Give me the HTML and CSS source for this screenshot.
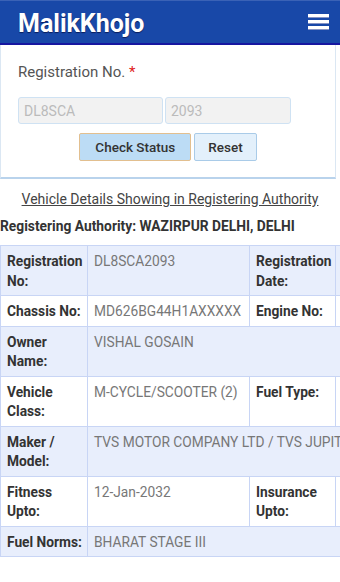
FILE: index.html
```html
<!DOCTYPE html>
<html lang="en">
<head>
    <meta charset="UTF-8">
    <meta name="viewport" content="width=device-width, initial-scale=1.0">
    <title>MalikKhojo</title>
    <link rel="stylesheet" href="styles.css">
</head>
<body>
    <div class="header">
        <span class="brand">MalikKhojo</span>
        <div class="menu">
            <span></span>
            <span></span>
            <span></span>
        </div>
    </div>

    <div class="panel">
        <div class="label">Registration No. <span class="req">*</span></div>
        <div class="inputs">
            <input type="text" class="reg-a" value="DL8SCA" disabled>
            <input type="text" class="reg-b" value="2093" disabled>
        </div>
        <div class="actions">
            <button class="btn primary">Check Status</button>
            <button class="btn">Reset</button>
        </div>
    </div>

    <div class="details-title">Vehicle Details Showing in Registering Authority</div>
    <div class="authority">Registering Authority: WAZIRPUR DELHI, DELHI</div>

    <div class="table-wrap">
        <table class="details">
            <colgroup>
                <col class="c1"><col class="c2"><col class="c3"><col class="c4">
            </colgroup>
            <tr class="alt">
                <th>Registration No:</th><td>DL8SCA2093</td>
                <th>Registration Date:</th><td></td>
            </tr>
            <tr>
                <th>Chassis No:</th><td>MD626BG44H1AXXXXX</td>
                <th>Engine No:</th><td></td>
            </tr>
            <tr class="alt">
                <th>Owner Name:</th><td colspan="3">VISHAL GOSAIN</td>
            </tr>
            <tr>
                <th>Vehicle Class:</th><td>M-CYCLE/SCOOTER (2)</td>
                <th>Fuel Type:</th><td></td>
            </tr>
            <tr class="alt">
                <th>Maker / Model:</th><td colspan="3">TVS MOTOR COMPANY LTD / TVS JUPITER</td>
            </tr>
            <tr>
                <th>Fitness Upto:</th><td>12-Jan-2032</td>
                <th>Insurance Upto:</th><td></td>
            </tr>
            <tr class="alt">
                <th>Fuel Norms:</th><td colspan="3">BHARAT STAGE III</td>
            </tr>
        </table>
    </div>
</body>
</html>
```

FILE: styles.css
```css
body {
    margin: 0;
    font-family: Roboto, "Liberation Sans", Arial, sans-serif;
    background: #fff;
    color: #333;
    overflow: hidden;
}
.header {
    height: 42px;
    background-color: #1848a8;
    border-top: 1px solid #3a62b6;
    border-bottom: 2px solid #1616a0;
    display: flex;
    align-items: center;
    justify-content: space-between;
    padding: 0 11px 0 18px;
    box-sizing: content-box;
}
.brand {
    color: #fff;
    font-size: 25px;
    font-weight: bold;
    text-shadow: 0 1px 1px rgba(0,0,40,0.6);
    margin-top: 2px;
}
.menu {
    display: flex;
    flex-direction: column;
    gap: 3px;
    margin-top: -2px;
}
.menu span {
    display: block;
    width: 21px;
    height: 3px;
    background: #fff;
    box-shadow: 0 1px 0 rgba(180,180,210,0.7);
}
.panel {
    border: 1px solid #dbe7f3;
    border-top: none;
    border-bottom: 2px solid #b9d3ec;
    width: 336px;
    padding: 18px 0 15px 17px;
    box-sizing: border-box;
    height: 134px;
}
.label {
    font-size: 15px;
    color: #555;
}
.req {
    color: #e02020;
}
.inputs {
    display: flex;
    gap: 2px;
    margin-top: 16px;
}
.inputs input {
    height: 27px;
    box-sizing: border-box;
    border: 1px solid #cfe2f3;
    border-radius: 3px;
    background: #f2f2f2;
    color: #bbb;
    font-family: inherit;
    font-size: 14px;
    padding: 0 5px;
    margin: 0;
}
.reg-a {
    width: 145px;
}
.reg-b {
    width: 126px;
}
.actions {
    display: flex;
    justify-content: center;
    gap: 3px;
    margin-top: 9px;
    margin-left: -17px;
}
.btn {
    height: 28px;
    padding: 0 13px;
    font-family: inherit;
    font-size: 13.5px;
    font-weight: 500;
    color: #333;
    background: #e3f0fb;
    border: 1px solid #a9cbe8;
    border-radius: 2px;
}
.btn.primary {
    width: 112px;
    background: #bcdcf5;
    border-color: #e2bf8f;
}
.details-title {
    text-align: center;
    font-size: 14px;
    color: #444;
    text-decoration: underline;
    margin-top: 12px;
}
.authority {
    font-size: 13.8px;
    font-weight: bold;
    color: #333;
    margin-top: 11px;
}
.table-wrap {
    margin-top: 11px;
    width: 340px;
    overflow: hidden;
}
.details {
    border-collapse: collapse;
    table-layout: fixed;
    width: 460px;
    font-size: 13.75px;
}
.details .c1 { width: 87px; }
.details .c2 { width: 162px; }
.details .c3 { width: 86px; }
.details .c4 { width: 125px; }
.details th,
.details td {
    border: 1px solid #c8d5f5;
    padding: 6px 6px 4px;
    line-height: 19.5px;
    text-align: left;
    vertical-align: top;
}
.details th {
    font-weight: bold;
    color: #333;
    padding-right: 1px;
}
.details td {
    color: #777;
    white-space: nowrap;
    overflow: hidden;
}
.details tr.alt {
    background-color: #e8eefc;
}
```
